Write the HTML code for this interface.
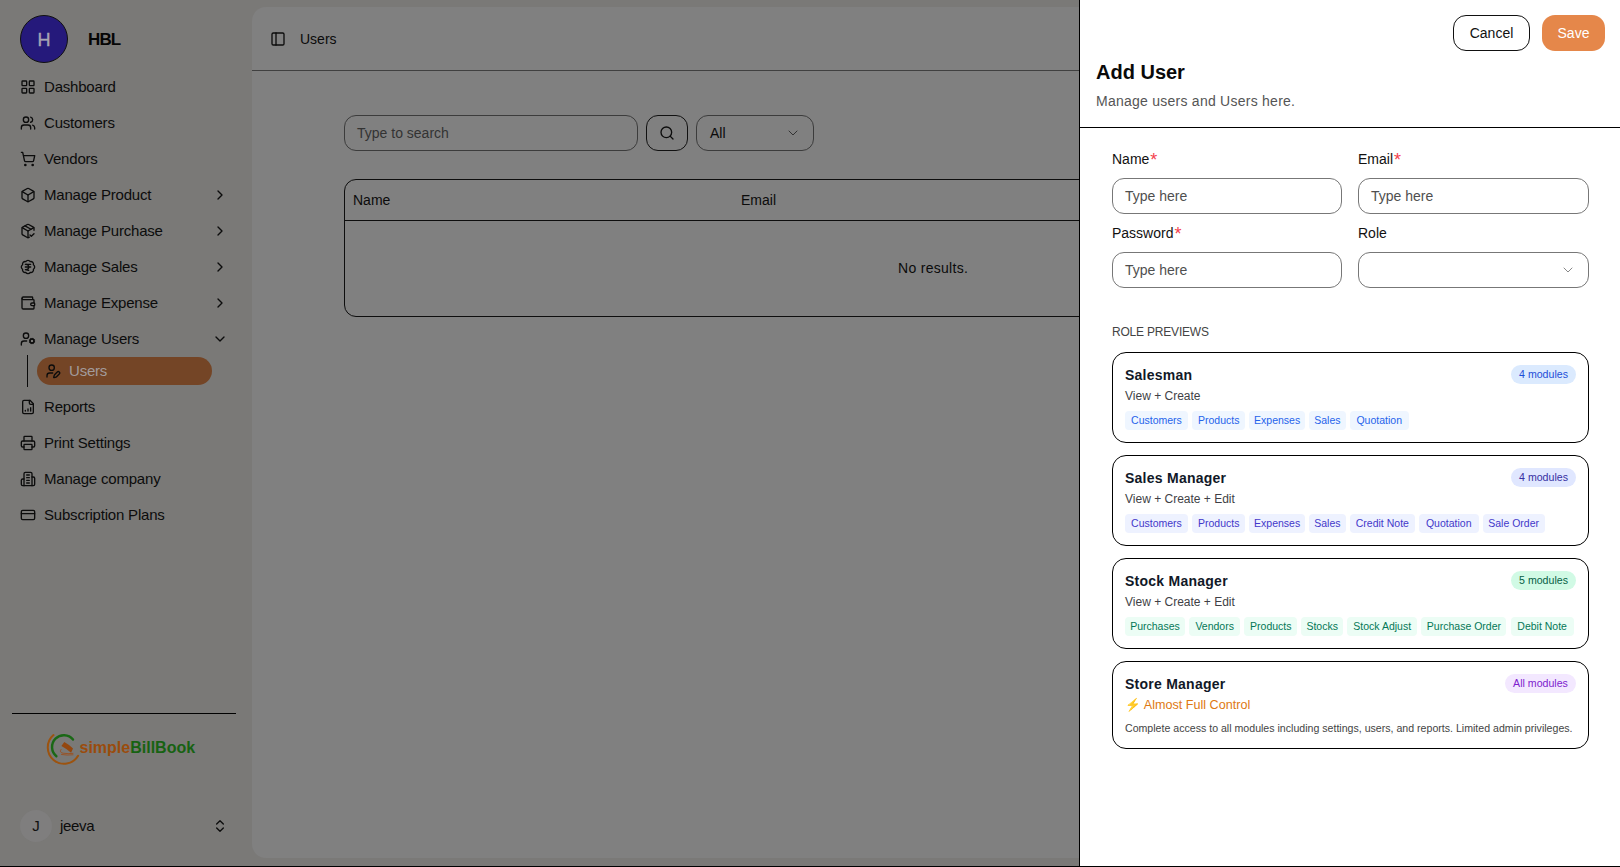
<!DOCTYPE html>
<html><head><meta charset="utf-8">
<style>
*{box-sizing:border-box;margin:0;padding:0}
html,body{width:1620px;height:867px;overflow:hidden}
body{position:relative;background:#7a7977;font-family:"Liberation Sans",sans-serif;color:#0b0b0b}
.a{position:absolute}
.nav{position:absolute;left:0;width:252px;height:36px;line-height:36px;font-size:15px;color:#0c0c0c;white-space:nowrap}
.nav svg{position:absolute;left:20px;top:10px;width:16px;height:16px;fill:none;stroke:#0c0c0c;stroke-width:2;stroke-linecap:round;stroke-linejoin:round}
.nav span{position:absolute;left:44px;top:0;letter-spacing:-0.2px}
.nav .chev{left:211.5px;width:16px;height:16px;top:10px}
#card{position:absolute;left:252px;top:7px;width:1400px;height:851px;background:#808080;border-radius:14px}
#panel{position:absolute;left:1079px;top:0;width:541px;height:867px;background:#fff;border-left:1px solid #000}
#bline{position:absolute;left:0;top:866px;width:1620px;height:1px;background:#000}
.ic{fill:none;stroke:#0c0c0c;stroke-width:2;stroke-linecap:round;stroke-linejoin:round}
.inp{border:1px solid #3c3c3c;border-radius:12px;font-size:14px;line-height:34px;padding-left:12px;white-space:nowrap}
.btn{border-radius:13px;font-size:14px;text-align:center}
.lbl{font-size:14px;line-height:20px;color:#111;white-space:nowrap}
.lbl b{font-weight:400;color:#f43f4e;font-size:18px;line-height:0;position:relative;top:2px;margin-left:1px}
.finp{height:35.5px;border:1px solid #777;border-radius:12px;font-size:14px;line-height:35px;padding-left:12px;color:#4f4f4f;white-space:nowrap}
.rc{left:1112px;width:477px;border:1px solid #000;border-radius:14px;background:#fff}
.rt{position:absolute;left:12px;top:11.5px;font-size:14px;font-weight:700;line-height:20px;color:#111827;white-space:nowrap;letter-spacing:0.25px}
.bd{position:absolute;right:12px;top:12px;height:19px;border-radius:9.5px;font-size:10.6px;line-height:19px;text-align:center;white-space:nowrap}
.rs{position:absolute;left:12px;top:34.5px;font-size:12px;line-height:17px;color:#3f3f46;white-space:nowrap}
.tags{position:absolute;left:12px;top:58px;display:flex;gap:4.2px;white-space:nowrap}
.tags i{font-style:normal;display:block;height:18.5px;line-height:19.5px;font-size:10.5px;text-align:center;border-radius:4px}
.blue i{background:#eff6ff;color:#2563eb}
.indigo i{background:#eef2ff;color:#4338ca}
.green i{background:#ecfdf5;color:#047857}
</style></head><body>

<!-- SIDEBAR -->
<div class="a" style="left:20px;top:15px;width:48px;height:48px;border-radius:50%;background:#25197b;border:1px solid #111;color:#a7a4b3;font-size:18px;font-weight:400;text-align:center;line-height:48px;-webkit-text-stroke:0.4px #a7a4b3">H</div>
<div class="a" style="left:88px;top:27px;font-size:17px;font-weight:700;line-height:26px;color:#050505;letter-spacing:-0.9px">HBL</div>

<div class="nav" style="top:69px"><svg viewBox="0 0 24 24"><rect x="3" y="3" width="7" height="7" rx="1"/><rect x="14" y="3" width="7" height="7" rx="1"/><rect x="14" y="14" width="7" height="7" rx="1"/><rect x="3" y="14" width="7" height="7" rx="1"/></svg><span>Dashboard</span></div>
<div class="nav" style="top:105px"><svg viewBox="0 0 24 24"><path d="M16 21v-2a4 4 0 0 0-4-4H6a4 4 0 0 0-4 4v2"/><circle cx="9" cy="7" r="4"/><path d="M22 21v-2a4 4 0 0 0-3-3.87"/><path d="M16 3.13a4 4 0 0 1 0 7.75"/></svg><span>Customers</span></div>
<div class="nav" style="top:141px"><svg viewBox="0 0 24 24"><circle cx="8" cy="21" r="1"/><circle cx="19" cy="21" r="1"/><path d="M2.05 2.05h2l2.66 12.42a2 2 0 0 0 2 1.58h9.78a2 2 0 0 0 1.95-1.57l1.65-7.43H5.12"/></svg><span>Vendors</span></div>
<div class="nav" style="top:177px"><svg viewBox="0 0 24 24"><path d="M21 8a2 2 0 0 0-1-1.73l-7-4a2 2 0 0 0-2 0l-7 4A2 2 0 0 0 3 8v8a2 2 0 0 0 1 1.73l7 4a2 2 0 0 0 2 0l7-4A2 2 0 0 0 21 16Z"/><path d="m3.3 7 8.7 5 8.7-5"/><path d="M12 22V12"/></svg><span>Manage Product</span><svg class="chev" viewBox="0 0 24 24"><path d="m9 18 6-6-6-6"/></svg></div>
<div class="nav" style="top:213px"><svg viewBox="0 0 24 24"><path d="M12 22V12"/><path d="m3.3 7 8.7 5 8.7-5"/><path d="M21 11V8a2 2 0 0 0-1-1.73l-7-4a2 2 0 0 0-2 0l-7 4A2 2 0 0 0 3 8v8a2 2 0 0 0 1 1.73l7 4a2 2 0 0 0 2 0l1-.57"/><path d="m7.5 4.27 9 5.15"/><path d="m15 18 2 2 4-4"/></svg><span>Manage Purchase</span><svg class="chev" viewBox="0 0 24 24"><path d="m9 18 6-6-6-6"/></svg></div>
<div class="nav" style="top:249px"><svg viewBox="0 0 24 24"><path d="M3.85 8.62a4 4 0 0 1 4.78-4.77 4 4 0 0 1 6.74 0 4 4 0 0 1 4.78 4.78 4 4 0 0 1 0 6.74 4 4 0 0 1-4.77 4.78 4 4 0 0 1-6.75 0 4 4 0 0 1-4.78-4.77 4 4 0 0 1 0-6.76Z"/><path d="M8 8h8"/><path d="M8 12h8"/><path d="m13 17-5-1h1a4 4 0 0 0 0-8"/></svg><span>Manage Sales</span><svg class="chev" viewBox="0 0 24 24"><path d="m9 18 6-6-6-6"/></svg></div>
<div class="nav" style="top:285px"><svg viewBox="0 0 24 24"><path d="M19 7V4a1 1 0 0 0-1-1H5a2 2 0 0 0 0 4h15a1 1 0 0 1 1 1v4h-3a2 2 0 0 0 0 4h3a1 1 0 0 0 1-1v-2a1 1 0 0 0-1-1"/><path d="M3 5v14a2 2 0 0 0 2 2h15a1 1 0 0 0 1-1v-4"/></svg><span>Manage Expense</span><svg class="chev" viewBox="0 0 24 24"><path d="m9 18 6-6-6-6"/></svg></div>
<div class="nav" style="top:321px"><svg viewBox="0 0 24 24"><circle cx="18" cy="15" r="3"/><circle cx="9" cy="7" r="4"/><path d="M10 15H6a4 4 0 0 0-4 4v2"/><path d="m21.7 16.4-.9-.3"/><path d="m15.2 13.9-.9-.3"/><path d="m16.6 18.7.3-.9"/><path d="m19.1 12.2.3-.9"/><path d="m19.6 18.7-.4-1"/><path d="m16.8 12.3-.4-1"/><path d="m14.3 16.6 1-.4"/><path d="m20.7 13.8 1-.4"/></svg><span>Manage Users</span><svg class="chev" viewBox="0 0 24 24"><path d="m6 9 6 6 6-6"/></svg></div>

<div class="a" style="left:27px;top:355px;width:1px;height:32px;background:#0a0a0a"></div>
<div class="a" style="left:37px;top:357px;width:175px;height:28px;border-radius:14px;background:#744526"></div>
<div class="nav" style="top:355px;height:32px;line-height:32px;color:#a29b9b;letter-spacing:-0.4px"><svg style="left:45px;top:8px" viewBox="0 0 24 24"><path d="M11.5 15H7a4 4 0 0 0-4 4v2"/><path d="M21.378 16.626a1 1 0 0 0-3.004-3.004l-4.01 4.012a2 2 0 0 0-.506.854l-.837 2.87a.5.5 0 0 0 .62.62l2.87-.837a2 2 0 0 0 .854-.506z"/><circle cx="10" cy="7" r="4"/></svg><span style="left:69px">Users</span></div>

<div class="nav" style="top:389px"><svg viewBox="0 0 24 24"><path d="M15 2H6a2 2 0 0 0-2 2v16a2 2 0 0 0 2 2h12a2 2 0 0 0 2-2V7Z"/><path d="M14 2v4a2 2 0 0 0 2 2h4"/><path d="M8 18v-1"/><path d="M12 18v-3"/><path d="M16 18v-5"/></svg><span>Reports</span></div>
<div class="nav" style="top:425px"><svg viewBox="0 0 24 24"><path d="M6 18H4a2 2 0 0 1-2-2v-5a2 2 0 0 1 2-2h16a2 2 0 0 1 2 2v5a2 2 0 0 1-2 2h-2"/><path d="M6 9V3a1 1 0 0 1 1-1h10a1 1 0 0 1 1 1v6"/><rect x="6" y="14" width="12" height="8" rx="1"/></svg><span>Print Settings</span></div>
<div class="nav" style="top:461px"><svg viewBox="0 0 24 24"><path d="M6 22V4a2 2 0 0 1 2-2h8a2 2 0 0 1 2 2v18Z"/><path d="M6 12H4a2 2 0 0 0-2 2v6a2 2 0 0 0 2 2h2"/><path d="M18 9h2a2 2 0 0 1 2 2v9a2 2 0 0 1-2 2h-2"/><path d="M10 6h4"/><path d="M10 10h4"/><path d="M10 14h4"/><path d="M10 18h4"/></svg><span>Manage company</span></div>
<div class="nav" style="top:497px"><svg viewBox="0 0 24 24"><rect width="20" height="14" x="2" y="5" rx="2"/><line x1="2" x2="22" y1="10" y2="10"/></svg><span>Subscription Plans</span></div>

<div class="a" style="left:12px;top:713px;width:224px;height:1px;background:#000"></div>

<!-- logo -->
<svg class="a" style="left:42px;top:728px" width="42" height="42" viewBox="0 0 42 42"><path d="M11.5 7.1A16.3 16.3 0 1 0 36.1 27.8" fill="none" stroke="#9c530f" stroke-width="2" stroke-linecap="round"/><path d="M31 11.6A11.8 11.8 0 1 0 14.4 28.2" fill="none" stroke="#1a6815" stroke-width="2.4" stroke-linecap="round"/><path d="M19.4 18L22.3 14Q27 16.5 31 20.5L29.1 24.7Q25 21 19.4 18Z" fill="#94470f"/><path d="M19 21.5Q17 24.5 21 25.2Q26 26 31 25.4M19.5 26.5Q25 27.5 31 26.8" fill="none" stroke="#9a5020" stroke-width="0.9" stroke-linecap="round"/></svg>
<div class="a" style="left:79.5px;top:738px;font-size:16px;font-weight:700;line-height:20px;white-space:nowrap"><span style="color:#9a4c0c">simple</span><span style="color:#176212">BillBook</span></div>

<!-- user -->
<div class="a" style="left:20px;top:810px;width:32px;height:32px;border-radius:50%;background:#7f7e7e;text-align:center;line-height:32px;font-size:15px;color:#111">J</div>
<div class="a" style="left:60px;top:816px;font-size:15px;line-height:20px;color:#0c0c0c;letter-spacing:-0.3px">jeeva</div>
<svg class="a" style="left:212px;top:818px;fill:none;stroke:#0c0c0c;stroke-width:2;stroke-linecap:round;stroke-linejoin:round" width="16" height="16" viewBox="0 0 24 24"><path d="m7 15 5 5 5-5"/><path d="m7 9 5-5 5 5"/></svg>

<!-- MAIN CARD -->
<div id="card"></div>
<svg class="a ic" style="left:270px;top:31px" width="16" height="16" viewBox="0 0 24 24"><rect width="18" height="18" x="3" y="3" rx="2"/><path d="M9 3v18"/></svg>
<div class="a" style="left:300px;top:29px;font-size:14px;line-height:20px">Users</div>
<div class="a" style="left:252px;top:70px;width:827px;height:1px;background:#404040"></div>
<div class="a inp" style="left:344px;top:115px;width:294px;height:36px;border-color:#3c3c3c;color:#333">Type to search</div>
<div class="a inp" style="left:646px;top:115px;width:42px;height:36px;border-color:#111"></div>
<svg class="a ic" style="left:659px;top:125px" width="16" height="16" viewBox="0 0 24 24"><circle cx="11" cy="11" r="8"/><path d="m21 21-4.3-4.3"/></svg>
<div class="a inp" style="left:696px;top:115px;width:118px;height:36px;border-color:#3c3c3c;color:#0b0b0b;padding-left:13px">All</div>
<svg class="a" style="left:785px;top:125px;fill:none;stroke:#333;stroke-width:1.5;stroke-linecap:round;stroke-linejoin:round" width="16" height="16" viewBox="0 0 24 24"><path d="m6 9 6 6 6-6"/></svg>
<div class="a" style="left:344px;top:179px;width:1000px;height:138px;border:1px solid #0e0e0e;border-radius:12px"></div>
<div class="a" style="left:344px;top:220px;width:1000px;height:1px;background:#0e0e0e"></div>
<div class="a" style="left:353px;top:190px;font-size:14px;line-height:20px">Name</div>
<div class="a" style="left:741px;top:190px;font-size:14px;line-height:20px">Email</div>
<div class="a" style="left:898px;top:258px;font-size:14px;line-height:20px;letter-spacing:0.3px">No results.</div>

<div id="panel"></div>
<div class="a btn" style="left:1453px;top:15px;width:77px;height:36px;border:1.5px solid #111;background:#fff;color:#111;line-height:35px">Cancel</div>
<div class="a btn" style="left:1542px;top:15px;width:63px;height:36px;background:#e5874a;color:#fff;line-height:36px">Save</div>
<div class="a" style="left:1096px;top:58px;font-size:20px;font-weight:700;line-height:28px;color:#0a0a0a">Add User</div>
<div class="a" style="left:1096px;top:91px;font-size:14px;line-height:20px;color:#555;letter-spacing:0.25px">Manage users and Users here.</div>
<div class="a" style="left:1080px;top:127px;width:540px;height:1px;background:#000"></div>

<div class="a lbl" style="left:1112px;top:149px">Name<b>*</b></div>
<div class="a lbl" style="left:1358px;top:149px">Email<b>*</b></div>
<div class="a finp" style="left:1112px;top:178px;width:230px">Type here</div>
<div class="a finp" style="left:1358px;top:178px;width:231px">Type here</div>
<div class="a lbl" style="left:1112px;top:223px">Password<b>*</b></div>
<div class="a lbl" style="left:1358px;top:223px">Role</div>
<div class="a finp" style="left:1112px;top:252px;width:230px">Type here</div>
<div class="a finp" style="left:1358px;top:252px;width:231px"></div>
<svg class="a" style="left:1560px;top:262px;fill:none;stroke:#888;stroke-width:1.5;stroke-linecap:round;stroke-linejoin:round" width="16" height="16" viewBox="0 0 24 24"><path d="m6 9 6 6 6-6"/></svg>

<div class="a" style="left:1112px;top:324px;font-size:12px;line-height:17px;color:#444;letter-spacing:-0.2px">ROLE PREVIEWS</div>

<div class="a rc" style="top:352px;height:91px">
 <div class="rt">Salesman</div><div class="bd" style="background:#dbeafe;color:#1d4ed8;width:65px">4 modules</div>
 <div class="rs">View + Create</div>
 <div class="tags blue"><i style="width:63px">Customers</i><i style="width:53px">Products</i><i style="width:55.5px">Expenses</i><i style="width:36.7px">Sales</i><i style="width:58.6px">Quotation</i></div>
</div>
<div class="a rc" style="top:455px;height:91px">
 <div class="rt">Sales Manager</div><div class="bd" style="background:#e0e7ff;color:#3730a3;width:65px">4 modules</div>
 <div class="rs">View + Create + Edit</div>
 <div class="tags indigo"><i style="width:63px">Customers</i><i style="width:53px">Products</i><i style="width:55.5px">Expenses</i><i style="width:36.7px">Sales</i><i style="width:64.8px">Credit Note</i><i style="width:59.6px">Quotation</i><i style="width:61.8px">Sale Order</i></div>
</div>
<div class="a rc" style="top:558px;height:91px">
 <div class="rt">Stock Manager</div><div class="bd" style="background:#d1fae5;color:#065f46;width:65px">5 modules</div>
 <div class="rs">View + Create + Edit</div>
 <div class="tags green"><i style="width:60px">Purchases</i><i style="width:51px">Vendors</i><i style="width:52.8px">Products</i><i style="width:41.7px">Stocks</i><i style="width:70px">Stock Adjust</i><i style="width:85px">Purchase Order</i><i style="width:63px">Debit Note</i></div>
</div>
<div class="a rc" style="top:661px;height:88px">
 <div class="rt">Store Manager</div><div class="bd" style="background:#f3e8ff;color:#7e22ce;width:71px">All modules</div>
 <div class="rs" style="color:#de7812;font-size:12.6px;top:35px">&#9889; Almost Full Control</div>
 <div class="a" style="left:12px;top:58px;font-size:10.6px;line-height:16px;color:#444;white-space:nowrap">Complete access to all modules including settings, users, and reports. Limited admin privileges.</div>
</div>
<div id="bline"></div>
</body></html>
